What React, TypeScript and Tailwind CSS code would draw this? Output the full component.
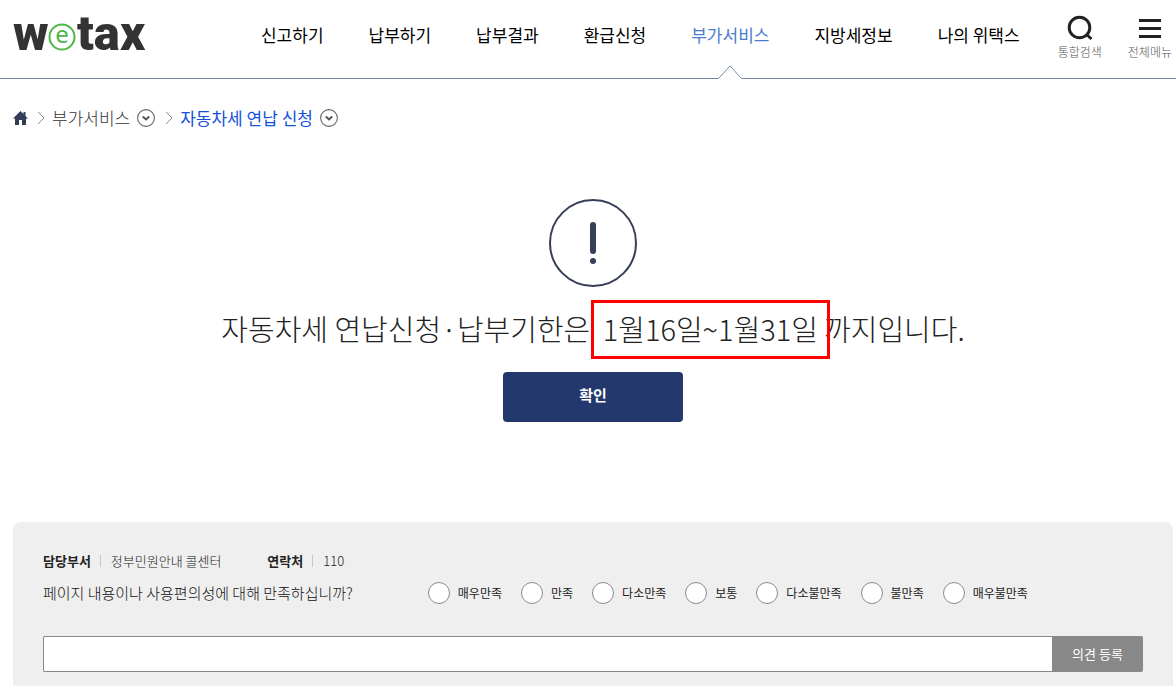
const menus = [
  "신고하기",
  "납부하기",
  "납부결과",
  "환급신청",
  "부가서비스",
  "지방세정보",
  "나의 위택스",
];

const ratings = [
  "매우만족",
  "만족",
  "다소만족",
  "보통",
  "다소불만족",
  "불만족",
  "매우불만족",
];

const Logo = () => (
  <svg width="152" height="68" viewBox="0 0 152 68" role="img" aria-label="wetax">
    <g fill="#333333" fontFamily="Roboto, sans-serif" fontWeight="900" fontSize="49">
      <text x="5" y="50">w</text>
      <text x="69" y="50">tax</text>
    </g>
    <circle cx="54" cy="37" r="12.5" fill="#fff" stroke="#4db848" strokeWidth="2" />
    <text
      x="54"
      y="43"
      textAnchor="middle"
      fill="#4db848"
      fontFamily="'Noto Sans', sans-serif"
      fontSize="24"
    >
      e
    </text>
  </svg>
);

const Separator = () => (
  <svg width="8" height="14" viewBox="0 0 8 14" fill="none" stroke="#8a8a8a" aria-hidden="true">
    <path d="M1 1l6 6-6 6" />
  </svg>
);

const MoreButton = ({ label }: { label: string }) => (
  <button type="button" aria-label={label} className="ml-[7px]">
    <svg className="block" width="18" height="18" viewBox="0 0 18 18" fill="none">
      <circle cx="9" cy="9" r="8.4" stroke="#666" strokeWidth="1.1" />
      <path d="M5.8 7.5L9 10.5l3.2-3" stroke="#555" strokeWidth="2" />
    </svg>
  </button>
);

const Header = () => (
  <header className="flex h-[79px] border-b border-[#7584a8] pr-1 pl-2">
    <a href="#" className="self-start">
      <Logo />
    </a>
    <nav className="ml-auto flex gap-[45px] text-[17px] text-black">
      {menus.map((menu) => (
        <a
          key={menu}
          href="#"
          className={
            menu === "부가서비스"
              ? "relative flex h-[79px] text-[#4a7bd0]"
              : "flex h-[79px]"
          }
        >
          <span className="mt-[23px] leading-6 whitespace-nowrap">{menu}</span>
          {menu === "부가서비스" && (
            <svg
              className="absolute bottom-0 left-1/2 -translate-x-1/2"
              width="24"
              height="14"
              viewBox="0 0 24 14"
              aria-hidden="true"
            >
              <path d="M0 14L12 1l12 13z" fill="#fff" />
              <path d="M0.5 13.5L12 1l11.5 12.5" fill="none" stroke="#7584a8" />
            </svg>
          )}
        </a>
      ))}
    </nav>
    <div className="ml-[38px] flex gap-[26px] text-xs font-light text-[#555]">
      <button type="button" className="flex flex-col items-center pt-[15px]">
        <svg width="26" height="26" viewBox="0 0 26 26" fill="none" stroke="#222" strokeWidth="3">
          <circle cx="12.5" cy="12.5" r="10.3" />
          <path d="M19.5 19.5l5 4.5" />
        </svg>
        <span className="mt-[3px] leading-4">통합검색</span>
      </button>
      <button type="button" className="flex flex-col items-center pt-[15px]">
        <svg width="22" height="26" viewBox="0 0 22 26" fill="#222">
          <path d="M0 4h22v3H0zM0 12h22v3H0zM0 20h22v3H0z" />
        </svg>
        <span className="mt-[3px] leading-4">전체메뉴</span>
      </button>
    </div>
  </header>
);

const Breadcrumb = () => (
  <nav aria-label="현재 위치" className="mt-[27px] flex items-center text-[17px] leading-6">
    <a href="#" aria-label="홈">
      <svg className="block" width="15" height="14" viewBox="0 0 15 14" fill="#333d58">
        <path d="M7.5 0L0 7.5h2V14h4V9h3v5h4V7.5h2L12.5 5V1h-2v2z" />
      </svg>
    </a>
    <span className="mr-[7px] ml-[9px]">
      <Separator />
    </span>
    <a href="#" className="font-light text-[#333]">부가서비스</a>
    <MoreButton label="부가서비스 메뉴 열기" />
    <span className="mr-[7px] ml-[10px]">
      <Separator />
    </span>
    <a href="#" className="text-[#1452d9]">자동차세 연납 신청</a>
    <MoreButton label="자동차세 연납 신청 메뉴 열기" />
  </nav>
);

const Notice = () => (
  <section className="mt-[69px] flex flex-col items-center">
    <svg width="88" height="88" viewBox="0 0 88 88" fill="none" stroke="#363f57">
      <circle cx="44" cy="44" r="43" strokeWidth="2" />
      <path d="M44 26v26" strokeWidth="6" strokeLinecap="round" />
      <circle cx="44" cy="62" r="3" fill="#363f57" stroke="none" />
    </svg>
    <h1 className="mt-[19px] text-[29px] leading-11 font-light whitespace-nowrap text-[#222]">
      자동차세 연납신청·납부기한은{" "}
      <span className="relative px-[6px]">
        1월16일~1월31일
        <span className="absolute -inset-x-[6px] -top-[7px] -bottom-[10px] border-3 border-[#ff0000]" />
      </span>
      까지입니다.
    </h1>
    <button
      type="button"
      className="mt-[22px] h-[50px] w-[180px] rounded-sm bg-[#23386d] pb-1 text-[15px] font-bold text-white"
    >
      확인
    </button>
  </section>
);

const Satisfaction = () => (
  <form className="mt-[100px] rounded-t-lg bg-[#efefef] px-[30px] pt-[29px] pb-[14px]">
    <dl className="flex items-center text-[13px] leading-5 text-[#222]">
      <dt className="font-bold">담당부서</dt>
      <dd className="ml-[9px] flex items-center font-light">
        <span className="mr-[10px] h-3 w-px bg-[#c8c8c8]" />
        정부민원안내 콜센터
      </dd>
      <dt className="ml-[46px] font-bold">연락처</dt>
      <dd className="ml-[9px] flex items-center font-light">
        <span className="mr-[10px] h-3 w-px bg-[#c8c8c8]" />
        110
      </dd>
    </dl>
    <fieldset className="mt-[11px] flex items-center">
      <legend className="float-left mr-[75px] text-[15px] leading-[22px] font-light text-[#111]">
        페이지 내용이나 사용편의성에 대해 만족하십니까?
      </legend>
      <div className="flex gap-[19px] text-xs text-[#222]">
        {ratings.map((rating) => (
          <label key={rating} className="flex items-center gap-2 whitespace-nowrap">
            <input
              type="radio"
              name="rating"
              className="size-[22px] appearance-none rounded-full border border-[#8c8c8c] bg-white checked:border-[6px]"
            />
            {rating}
          </label>
        ))}
      </div>
    </fieldset>
    <div className="mt-8 flex h-9">
      <input
        type="text"
        aria-label="의견"
        className="min-w-0 flex-1 rounded-l-xs border border-r-0 border-[#888] bg-white px-3 text-[13px]"
      />
      <button type="submit" className="w-[91px] rounded-r-xs bg-[#888] text-[13px] text-white">
        의견 등록
      </button>
    </div>
  </form>
);

const App: React.FC = () => {
  return (
    <div className="bg-white font-['Noto_Sans_CJK_KR',sans-serif]">
      <Header />
      <main className="pr-[3px] pl-[13px]">
        <Breadcrumb />
        <Notice />
        <Satisfaction />
      </main>
    </div>
  );
};

export default App;
